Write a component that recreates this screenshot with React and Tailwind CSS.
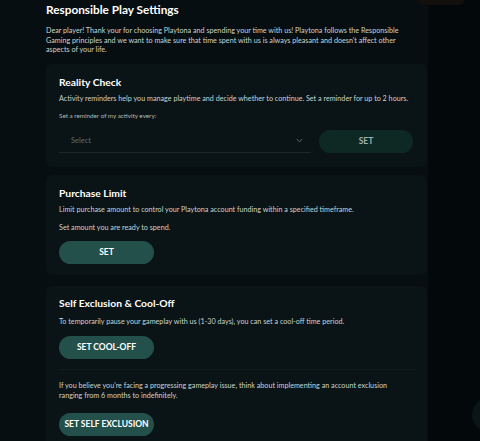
import React from "react";

const font = { fontFamily: "Lato, 'Noto Sans', sans-serif" };

function Card({ children, className = "" }) {
  return (
    <div className={"rounded-[6px] bg-[#0a1417] px-[13px] " + className}>{children}</div>
  );
}

function Btn({ children, className = "" }) {
  return (
    <button
      className={
        "flex h-[23px] w-[95px] items-center justify-center rounded-full bg-[#23504a] text-[8.5px] font-bold text-white " +
        className
      }
    >
      {children}
    </button>
  );
}

export default function App() {
  return (
    <div className="relative flex h-[441px] w-[480px] overflow-hidden bg-[#03080a]" style={font}>
      <div className="w-[428px] shrink-0 bg-[#060e11] pl-[46px] pr-[1px]">
        <h1 className="pt-[1px] text-[11.8px] font-bold leading-[18px] text-white">Responsible Play Settings</h1>
        <p className="mt-[7px] text-[7.2px] leading-[9.7px] text-[#c9d3cf]">
          Dear player! Thank your for choosing Playtona and spending your time with us! Playtona follows the Responsible
          <br />
          Gaming principles and we want to make sure that time spent with us is always pleasant and doesn't affect other
          <br />
          aspects of your life.
        </p>

        <Card className="mt-[9px] pt-[10.5px] pb-[14px]">
          <h2 className="text-[10.3px] font-bold leading-[14px] text-white">Reality Check</h2>
          <p className="mt-[5px] text-[7.2px] leading-[10px] text-[#c9d3cf]">
            Activity reminders help you manage playtime and decide whether to continue. Set a reminder for up to 2 hours.
          </p>
          <p className="mt-[8.5px] text-[6.3px] leading-[8px] text-[#aebcb7]">Set a reminder of my activity every:</p>
          <div className="mt-[9.5px] flex items-center gap-[8px]">
            <div className="flex h-[23px] w-[252px] items-center justify-between border-b border-[#1b2729] pl-[12px] pr-[8px]">
              <span className="text-[7.5px] text-[#5a6e6a]">Select</span>
              <svg width="7" height="5" viewBox="0 0 7 5" fill="none">
                <path d="M0.8 1 L3.5 3.8 L6.2 1" stroke="#6f817d" strokeWidth="0.8" />
              </svg>
            </div>
            <button className="flex h-[23px] w-[94px] items-center justify-center rounded-full bg-[#0e2924] text-[8.5px] font-bold text-[#a3b1ad]">
              SET
            </button>
          </div>
        </Card>

        <Card className="mt-[8px] pt-[11px] pb-[11px]">
          <h2 className="text-[10.3px] font-bold leading-[14px] text-white">Purchase Limit</h2>
          <p className="mt-[5.5px] text-[7.2px] leading-[10px] text-[#c9d3cf]">
            Limit purchase amount to control your Playtona account funding within a specified timeframe.
          </p>
          <p className="mt-[7.5px] text-[7.2px] leading-[10px] text-[#c9d3cf]">Set amount you are ready to spend.</p>
          <Btn className="mt-[8.5px]">SET</Btn>
        </Card>

        <Card className="mt-[11px] pt-[10.3px] pb-[12px]">
          <h2 className="text-[10.3px] font-bold leading-[14px] text-white">Self Exclusion &amp; Cool-Off</h2>
          <p className="mt-[7px] text-[7.2px] leading-[10px] text-[#c9d3cf]">
            To temporarily pause your gameplay with us (1-30 days), you can set a cool-off time period.
          </p>
          <Btn className="mt-[8.7px] h-[22px]">SET COOL-OFF</Btn>
          <div className="mt-[10px] h-px w-[356px] bg-[#111c1f]" />
          <p className="mt-[11px] text-[7.2px] leading-[9.7px] text-[#c9d3cf]">
            If you believe you're facing a progressing gameplay issue, think about implementing an account exclusion
            <br />
            ranging from 6 months to indefinitely.
          </p>
          <Btn className="mt-[12.5px]">SET SELF EXCLUSION</Btn>
        </Card>
      </div>
      <div className="flex-1" />
      <div className="absolute left-[418px] top-[-6px] h-[11px] w-[46px] rounded-[5px] bg-[#120f0c]" />
      <div className="absolute left-[472px] top-[398px] h-[34px] w-[34px] rounded-full bg-[#0b1517]" />
    </div>
  );
}
